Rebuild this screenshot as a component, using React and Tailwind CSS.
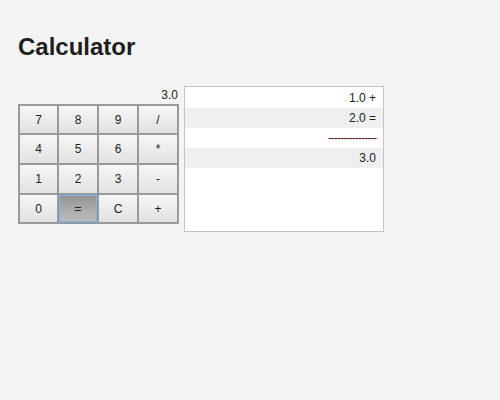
import React from 'react';

const keys = ['7', '8', '9', '/', '4', '5', '6', '*', '1', '2', '3', '-', '0', '=', 'C', '+'];

const tape = [
  { text: '1.0 +', shade: false },
  { text: '2.0 =', shade: true },
  { text: '----------------', shade: false, rule: true },
  { text: '3.0', shade: true },
];

const Key = ({ label }) => {
  const active = label === '=';
  return (
    <button
      type="button"
      className={`flex items-center justify-center border text-[12px] text-[#222] ${
        active
          ? 'border-[#7a9cc4] bg-gradient-to-b from-[#949494] to-[#bebebe] shadow-[inset_0_0_0_1px_#8fb0d2]'
          : 'border-[#9a9a9a] bg-gradient-to-b from-[#f7f7f7] to-[#e1e1e1]'
      }`}
    >
      {label}
    </button>
  );
};

const App = () => {
  return (
    <div className="min-h-[400px] bg-[#f4f4f4] px-[18px] pt-[33px] font-['Liberation_Sans',Arial,sans-serif] text-[#222]">
      <h1 className="text-[24px] font-bold leading-[28px] text-[#1e1e1e]">Calculator</h1>

      <div className="mt-[25px] flex items-start gap-[5px]">
        <div className="flex flex-col">
          <div className="flex h-[18px] items-center justify-end pr-[1px] text-[12px]">3.0</div>
          <div className="grid grid-cols-[39px_40px_40px_40px] grid-rows-[29px_30px_30px_29px] border border-[#9a9a9a]">
            {keys.map((k) => (
              <Key key={k} label={k} />
            ))}
          </div>
        </div>

        <div className="h-[146px] w-[200px] border border-[#c4c4c4] bg-white pt-px">
          {tape.map((row, i) => (
            <div
              key={i}
              className={`flex h-[20px] items-center justify-end pr-[7px] text-[12px] ${
                row.shade ? 'bg-[#eeeff1]' : 'bg-white'
              } ${row.rule ? 'tracking-[-1px] text-[#5e1c1c]' : 'text-[#222]'}`}
            >
              {row.text}
            </div>
          ))}
        </div>
      </div>
    </div>
  );
};

export default App;
